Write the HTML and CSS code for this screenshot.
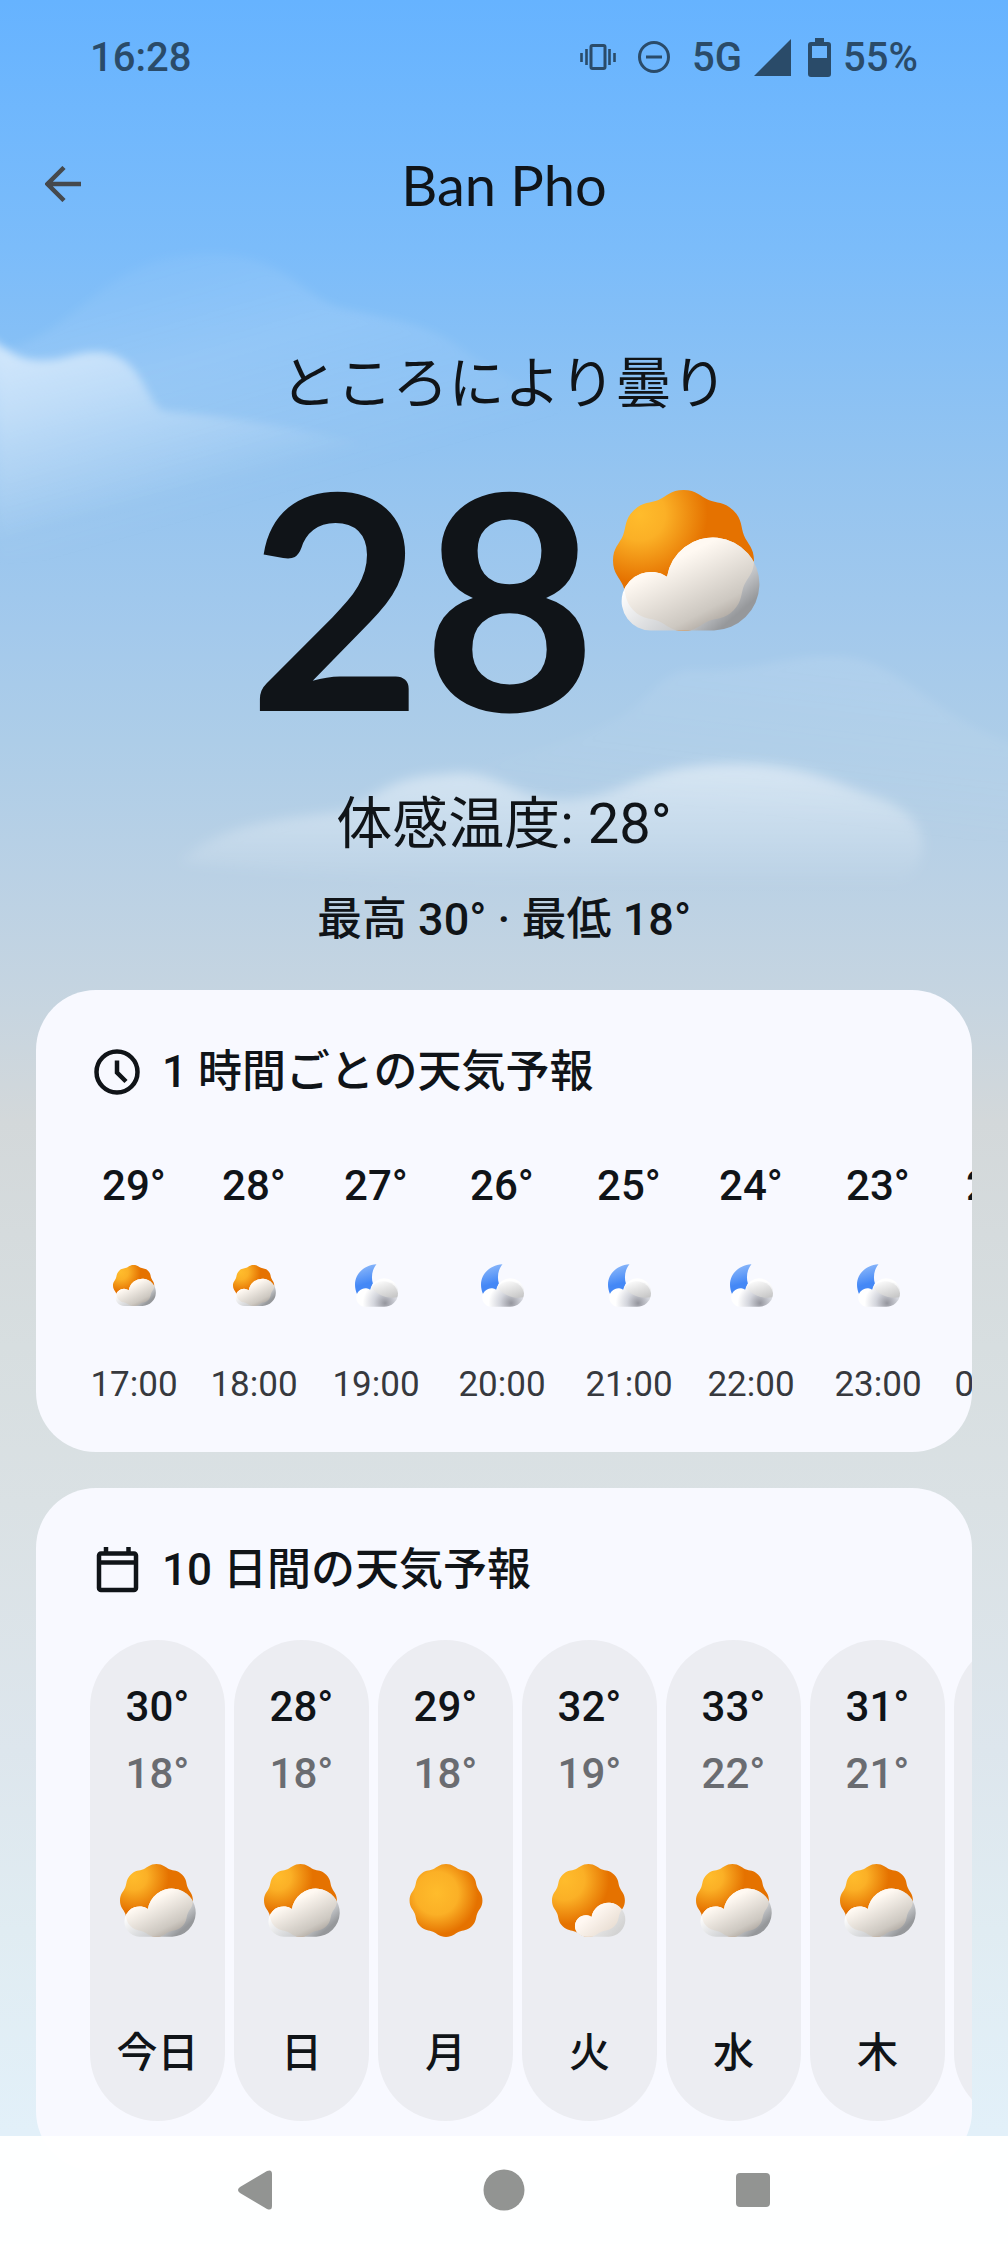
FILE: index.html
```
<!DOCTYPE html>
<html lang="ja">
  <head>
    <meta charset="utf-8">
    <meta name="viewport" content="width=device-width, initial-scale=1">
    <title>Ban Pho</title>
    <link rel="stylesheet" href="styles.css">
  </head>
  <body>
    <!-- shared weather icons -->
    <svg class="sprite" width="0" height="0" aria-hidden="true">
      <defs>
        <radialGradient id="sunPartly" gradientUnits="userSpaceOnUse" cx="-44" cy="-46" r="68">
          <stop offset="0" stop-color="#ffbc2c"/>
          <stop offset=".38" stop-color="#fbb026"/>
          <stop offset="1" stop-color="#e57200"/>
        </radialGradient>
        <radialGradient id="sunMostly" gradientUnits="userSpaceOnUse" cx="-46" cy="-40" r="86">
          <stop offset="0" stop-color="#ffbc2c"/>
          <stop offset=".45" stop-color="#fbb026"/>
          <stop offset="1" stop-color="#e57200"/>
        </radialGradient>
        <radialGradient id="sunClear" gradientUnits="userSpaceOnUse" cx="-18" cy="-14" r="80">
          <stop offset="0" stop-color="#ffbc2c"/>
          <stop offset=".52" stop-color="#fbb026"/>
          <stop offset="1" stop-color="#e57200"/>
        </radialGradient>
        <linearGradient id="cloudOuter" gradientUnits="userSpaceOnUse" x1="40" y1="75" x2="100" y2="145">
          <stop offset="0" stop-color="#ffffff"/>
          <stop offset=".75" stop-color="#c4c6c9"/>
          <stop offset="1" stop-color="#96989b"/>
        </linearGradient>
        <linearGradient id="cloudInner" gradientUnits="userSpaceOnUse" x1="62" y1="70" x2="98" y2="140">
          <stop offset="0" stop-color="#fff9f2"/>
          <stop offset=".75" stop-color="#cdc8c1"/>
          <stop offset="1" stop-color="#aca59e"/>
        </linearGradient>
        <linearGradient id="cloudLight" gradientUnits="userSpaceOnUse" x1="50" y1="80" x2="110" y2="150">
          <stop offset="0" stop-color="#fff8f2"/>
          <stop offset="1" stop-color="#e2d6ca"/>
        </linearGradient>
        <linearGradient id="cloudLightOuter" gradientUnits="userSpaceOnUse" x1="20" y1="75" x2="105" y2="150">
          <stop offset="0" stop-color="#ffffff"/>
          <stop offset="1" stop-color="#d3d3d3"/>
        </linearGradient>
        <linearGradient id="moonFill" gradientUnits="userSpaceOnUse" x1="20" y1="10" x2="40" y2="80">
          <stop offset="0" stop-color="#84b3fa"/>
          <stop offset=".7" stop-color="#4488f6"/>
        </linearGradient>
        <radialGradient id="nightCloud" gradientUnits="userSpaceOnUse" cx="91" cy="118" r="68">
          <stop offset="0" stop-color="#95969e"/>
          <stop offset=".5" stop-color="#d3d5dc"/>
          <stop offset="1" stop-color="#ffffff"/>
        </radialGradient>
        <linearGradient id="nightLobe" gradientUnits="userSpaceOnUse" x1="80" y1="45" x2="102" y2="115">
          <stop offset="0" stop-color="#ffffff"/>
          <stop offset="1" stop-color="#bebebe"/>
        </linearGradient>
        <path id="sunShape" d="M0,-70.5 C13,-70.5 16.8,-63.9 25.1,-60.5 C33.4,-57.1 40.7,-59.1 49.9,-49.9 C59.1,-40.7 57.1,-33.4 60.5,-25.1 C63.9,-16.8 70.5,-13 70.5,0 C70.5,13 63.9,16.8 60.5,25.1 C57.1,33.4 59.1,40.7 49.9,49.9 C40.7,59.1 33.4,57.1 25.1,60.5 C16.8,63.9 13,70.5 0,70.5 C-13,70.5 -16.8,63.9 -25.1,60.5 C-33.4,57.1 -40.7,59.1 -49.9,49.9 C-59.1,40.7 -57.1,33.4 -60.5,25.1 C-63.9,16.8 -70.5,13 -70.5,0 C-70.5,-13 -63.9,-16.8 -60.5,-25.1 C-57.1,-33.4 -59.1,-40.7 -49.9,-49.9 C-40.7,-59.1 -33.4,-57.1 -25.1,-60.5 C-16.8,-63.9 -13,-70.5 0,-70.5Z"/>
        <path id="cloudShape" d="M38,140.5 A29.3,29.3 0 1 1 54,86.7 A46.5,46.5 0 1 1 101,140.5Z"/>
        <clipPath id="inSun"><use href="#sunShape" x="70.5" y="70.5"/></clipPath>
        <clipPath id="inNight"><path d="M30,129 A28,28 0 1 1 46,77 A43,43 0 1 1 88,129Z"/></clipPath>
      </defs>
      <symbol id="partly" viewBox="0 0 147 141">
        <use href="#sunShape" x="70.5" y="70.5" fill="url(#sunPartly)"/>
        <use href="#cloudShape" fill="url(#cloudOuter)"/>
        <g clip-path="url(#inSun)"><use href="#cloudShape" fill="url(#cloudInner)"/></g>
      </symbol>
      <symbol id="mostly" viewBox="0 0 147 141">
        <use href="#sunShape" x="70.5" y="70.5" fill="url(#sunMostly)"/>
        <use href="#cloudShape" transform="translate(38.3 41.2) scale(.707)" fill="url(#cloudLightOuter)"/>
        <g clip-path="url(#inSun)"><use href="#cloudShape" transform="translate(38.3 41.2) scale(.707)" fill="url(#cloudLight)"/></g>
      </symbol>
      <symbol id="clear" viewBox="0 0 147 141">
        <use href="#sunShape" x="73.5" y="70.5" fill="url(#sunClear)"/>
      </symbol>
      <symbol id="night" viewBox="0 0 130 129">
        <path d="M65,0 C26,3 0,30 0,62 C0,72 3,82 6,90 L45,84 L54,58 C48,38 52,15 65,0Z" fill="url(#moonFill)"/>
        <path d="M30,129 A28,28 0 1 1 46,77 A43,43 0 1 1 88,129Z" fill="url(#nightCloud)"/>
        <path clip-path="url(#inNight)" d="M50,70 A45,45 0 0 1 130,88 L128,100 C95,106 65,92 50,70Z" fill="url(#nightLobe)"/>
      </symbol>
    </svg>

    <svg class="sky" viewBox="0 0 1008 1000" aria-hidden="true">
      <defs>
        <filter id="soft" x="-20%" y="-20%" width="140%" height="140%"><feGaussianBlur stdDeviation="6"/></filter>
        <filter id="softer" x="-20%" y="-20%" width="140%" height="140%"><feGaussianBlur stdDeviation="4"/></filter>
        <linearGradient id="c1" gradientUnits="userSpaceOnUse" x1="230" y1="245" x2="300" y2="490">
          <stop offset="0" stop-color="#fff" stop-opacity=".05"/>
          <stop offset=".4" stop-color="#fff" stop-opacity=".11"/>
          <stop offset="1" stop-color="#fff" stop-opacity="0"/>
        </linearGradient>
        <linearGradient id="c2" gradientUnits="userSpaceOnUse" x1="40" y1="345" x2="85" y2="520">
          <stop offset="0" stop-color="#fff" stop-opacity=".58"/>
          <stop offset=".5" stop-color="#fff" stop-opacity=".28"/>
          <stop offset="1" stop-color="#fff" stop-opacity="0"/>
        </linearGradient>
        <linearGradient id="c3" gradientUnits="userSpaceOnUse" x1="800" y1="655" x2="780" y2="820">
          <stop offset="0" stop-color="#fff" stop-opacity=".1"/>
          <stop offset="1" stop-color="#fff" stop-opacity="0"/>
        </linearGradient>
        <linearGradient id="c4" gradientUnits="userSpaceOnUse" x1="600" y1="765" x2="600" y2="885">
          <stop offset="0" stop-color="#fff" stop-opacity=".48"/>
          <stop offset=".5" stop-color="#fff" stop-opacity=".26"/>
          <stop offset="1" stop-color="#fff" stop-opacity="0"/>
        </linearGradient>
      </defs>
      <path filter="url(#softer)" fill="url(#c1)" d="M0,350 C80,335 100,254 210,254 C290,254 300,300 350,310 C400,322 430,322 470,355 C510,380 560,400 610,450 L610,560 L0,560Z"/>
      <path filter="url(#softer)" fill="url(#c2)" d="M-30,325 C0,340 10,362 45,360 C70,359 75,351 100,352 C145,356 145,405 165,411 C220,416 290,425 390,450 C350,540 200,600 -30,600Z"/>
      <path filter="url(#softer)" fill="url(#c3)" d="M470,768 C530,750 560,748 620,718 C650,700 660,672 690,670 C760,672 780,655 836,656 C910,660 930,725 1040,752 L1040,840 L470,840Z"/>
      <path filter="url(#soft)" fill="url(#c4)" d="M180,862 C220,825 270,820 341,812 C375,800 385,777 440,775 C500,765 510,800 566,800 C630,795 640,765 730,764 C800,763 830,780 870,795 C915,808 930,835 920,860 C910,885 890,892 861,892 C600,890 350,880 180,862Z"/>
    </svg>

    <div class="statusbar">
      <span>16:28</span>
      <div class="indicators">
        <svg width="36" height="26" viewBox="0 0 36 26" fill="none" stroke="currentColor" stroke-width="3">
          <rect x="11" y="1.5" width="14" height="23" rx="1.5"/>
          <path d="M6.500,5v16M29.500,5v16M1.500,9v9M34.500,9v9" stroke-width="2.600"/>
        </svg>
        <svg width="32" height="32" viewBox="0 0 32 32" fill="none" stroke="currentColor" stroke-width="3">
          <circle cx="16" cy="16" r="14.500"/>
          <path d="M8,16h16"/>
        </svg>
        <span>5G</span>
        <svg class="signal" width="37" height="37" viewBox="0 0 37 37" fill="currentColor"><path d="M37,0V37H0Z"/></svg>
        <div class="battery">
          <svg width="23" height="39" viewBox="0 0 23 39" fill="currentColor">
            <path fill-rule="evenodd" d="M7,0H16V4H20Q23,4 23,7V36Q23,39 20,39H3Q0,39 0,36V7Q0,4 3,4H7ZM4,8V20H19V8Z"/>
          </svg>
          <span>55%</span>
        </div>
      </div>
    </div>

    <header class="topbar">
      <button class="back" aria-label="戻る">
        <svg width="36" height="36" viewBox="0 0 36 36" fill="none" stroke="currentColor" stroke-width="4.500">
          <path d="M36,18H3M19,1.500L2.500,18L19,34.500"/>
        </svg>
      </button>
      <h1>Ban Pho</h1>
    </header>

    <main>
      <section class="current">
        <p class="condition">ところにより曇り</p>
        <div class="now">
          <span class="degrees">28</span>
          <svg class="nowicon"><use href="#partly"/></svg>
        </div>
        <p class="feels">体感温度: 28°</p>
        <p class="hilo">最高 30° · 最低 18°</p>
      </section>

      <section class="card">
        <h2>
          <svg width="46" height="46" viewBox="0 0 46 46" fill="none" stroke="currentColor" stroke-width="4.500">
            <circle cx="23" cy="23" r="20.500"/>
            <path d="M23,11.500V23.500L32,32.500"/>
          </svg>
          1 時間ごとの天気予報
        </h2>
        <ul class="hours">
          <li><b>29°</b><svg><use href="#partly"/></svg><span>17:00</span></li>
          <li><b>28°</b><svg><use href="#partly"/></svg><span>18:00</span></li>
          <li><b>27°</b><svg><use href="#night"/></svg><span>19:00</span></li>
          <li><b>26°</b><svg><use href="#night"/></svg><span>20:00</span></li>
          <li><b>25°</b><svg><use href="#night"/></svg><span>21:00</span></li>
          <li><b>24°</b><svg><use href="#night"/></svg><span>22:00</span></li>
          <li><b>23°</b><svg><use href="#night"/></svg><span>23:00</span></li>
          <li><b>23°</b><svg><use href="#night"/></svg><span>00:00</span></li>
        </ul>
      </section>

      <section class="card">
        <h2>
          <svg width="46" height="46" viewBox="0 0 46 46" fill="none" stroke="currentColor" stroke-width="4.500">
            <rect x="5" y="6.500" width="37" height="36.500" rx="2"/>
            <path d="M5,15.500H42M12,0V7M34.500,0V7"/>
          </svg>
          10 日間の天気予報
        </h2>
        <ul class="days">
          <li><b>30°</b><i>18°</i><svg><use href="#partly"/></svg><span>今日</span></li>
          <li><b>28°</b><i>18°</i><svg><use href="#partly"/></svg><span>日</span></li>
          <li><b>29°</b><i>18°</i><svg><use href="#clear"/></svg><span>月</span></li>
          <li><b>32°</b><i>19°</i><svg><use href="#mostly"/></svg><span>火</span></li>
          <li><b>33°</b><i>22°</i><svg><use href="#partly"/></svg><span>水</span></li>
          <li><b>31°</b><i>21°</i><svg><use href="#partly"/></svg><span>木</span></li>
          <li></li>
        </ul>
      </section>
    </main>

    <nav class="navbar">
      <button aria-label="戻る">
        <svg width="42" height="42" viewBox="0 0 42 42" fill="currentColor"><path d="M33,2Q38,0 38,5V37Q38,42 33,40L6,24Q2,21 6,18Z"/></svg>
      </button>
      <button aria-label="ホーム">
        <svg width="42" height="42" viewBox="0 0 42 42" fill="currentColor"><circle cx="21" cy="21" r="20.500"/></svg>
      </button>
      <button aria-label="最近使ったアプリ">
        <svg width="42" height="42" viewBox="0 0 42 42" fill="currentColor"><rect x="4" y="4" width="34" height="34" rx="4"/></svg>
      </button>
    </nav>
  </body>
</html>
```
FILE: styles.css
```
* {
  box-sizing: border-box;
}

body {
  margin: 0;
  min-height: 100vh;
  padding-bottom: 73px;
  position: relative;
  overflow-x: hidden;
  font-family: Roboto, "Noto Sans CJK JP", sans-serif;
  color: #101418;
  background: linear-gradient(#66b3ff, #7bbcfa 11%, #94c4f0 21%, #a3c9ec 28%, #adcde8 33%, #bad1e5 39%, #c7d5e0 45%, #d3d8da 50%, #d7dee0 60%, #dae1e4 67%, #dde6ed 78%, #e0ecf2 86%, #e2f0f9 95%);
}

h1, h2, p, ul {
  margin: 0;
  padding: 0;
  font-weight: 400;
}

ul {
  list-style: none;
}

svg {
  display: block;
}

button {
  border: 0;
  padding: 0;
  background: none;
  color: inherit;
}

.sprite, .sky {
  position: absolute;
  top: 0;
  left: 0;
}

.sky {
  width: 100%;
  z-index: -1;
}

.statusbar {
  display: flex;
  justify-content: space-between;
  align-items: center;
  height: 114px;
  padding: 0 90px;
  font-size: 40px;
  font-weight: 500;
  color: #2a4b69;
}

.indicators {
  display: flex;
  align-items: center;
  gap: 22px;
}

.signal {
  margin-left: -10px;
}

.battery {
  display: flex;
  align-items: center;
  gap: 12px;
  margin-left: -5px;
}

.topbar {
  display: grid;
  grid-template-columns: 36px 1fr 36px;
  align-items: center;
  height: 140px;
  padding: 0 45px;
}

.topbar h1 {
  font-family: Lato, sans-serif;
  font-size: 56px;
  text-align: center;
}

.back {
  color: #45494d;
}

.current {
  display: flex;
  flex-direction: column;
  align-items: center;
  padding: 90px 0 42px;
}

.condition, .feels {
  font-size: 56px;
  line-height: 80px;
}

.now {
  display: flex;
  align-items: flex-start;
  gap: 16px;
  margin: 46px 0 64px;
}

.degrees {
  font-family: Lato, sans-serif;
  font-size: 300px;
  line-height: 250px;
  font-weight: 700;
}

.nowicon {
  width: 147px;
  height: 141px;
  margin-top: 20px;
}

.hilo {
  margin-top: 28px;
  font-size: 45px;
  line-height: 56px;
  font-weight: 500;
}

.card {
  margin: 0 36px 36px;
  padding: 54px 0 50px 54px;
  border-radius: 60px;
  background: #f8f9ff;
  overflow: hidden;
}

.card:last-child {
  margin-bottom: 0;
}

.card h2 {
  display: flex;
  align-items: center;
  gap: 22px;
  padding-left: 4px;
  font-size: 44px;
  line-height: 56px;
  font-weight: 500;
}

.card b {
  font-size: 42px;
  line-height: 56px;
  font-weight: 500;
}

.hours {
  display: grid;
  grid-template-columns: 88px 88px 92px 96px 94px 86px 104px 72px;
  column-gap: 32px;
  margin-top: 58px;
}

.hours li, .days li {
  display: flex;
  flex-direction: column;
  align-items: center;
}

.hours svg {
  width: 43px;
  height: 43px;
  margin: 50px 0 60px;
}

.hours span {
  font-size: 35px;
  line-height: 35px;
  color: #37393e;
}

.days {
  display: flex;
  gap: 9px;
  margin-top: 42px;
}

.days li {
  flex: 0 0 135px;
  height: 481px;
  padding-top: 39px;
  border-radius: 68px;
  background: #ecedf2;
}

.days i {
  margin-top: 11px;
  font-size: 42px;
  line-height: 56px;
  font-style: normal;
  font-weight: 500;
  color: #6a6c71;
}

.days svg {
  width: 76px;
  height: 73px;
  margin: 62px 0 80px;
}

.days span {
  font-size: 41px;
  line-height: 72px;
  font-weight: 500;
}

.navbar {
  position: fixed;
  left: 0;
  right: 0;
  bottom: 0;
  display: flex;
  justify-content: center;
  align-items: center;
  gap: 207px;
  height: 108px;
  background: rgba(255, 255, 255, .95);
  color: #929492;
}
```
